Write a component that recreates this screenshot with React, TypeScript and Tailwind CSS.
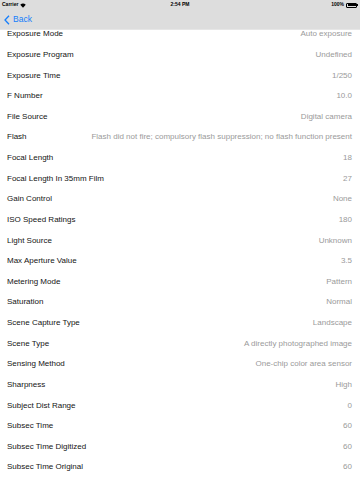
const rows: [string, string][] = [
  ["Exposure Mode", "Auto exposure"],
  ["Exposure Program", "Undefined"],
  ["Exposure Time", "1/250"],
  ["F Number", "10.0"],
  ["File Source", "Digital camera"],
  ["Flash", "Flash did not fire; compulsory flash suppression; no flash function present"],
  ["Focal Length", "18"],
  ["Focal Length In 35mm Film", "27"],
  ["Gain Control", "None"],
  ["ISO Speed Ratings", "180"],
  ["Light Source", "Unknown"],
  ["Max Aperture Value", "3.5"],
  ["Metering Mode", "Pattern"],
  ["Saturation", "Normal"],
  ["Scene Capture Type", "Landscape"],
  ["Scene Type", "A directly photographed image"],
  ["Sensing Method", "One-chip color area sensor"],
  ["Sharpness", "High"],
  ["Subject Dist Range", "0"],
  ["Subsec Time", "60"],
  ["Subsec Time Digitized", "60"],
  ["Subsec Time Original", "60"],
];

export default function App() {
  return (
    <div className="relative w-[360px] h-[480px] overflow-hidden bg-white font-['Liberation_Sans',Arial,sans-serif]">
      {/* list */}
      <div className="pt-[24px]">
        {rows.map(([label, value]) => (
          <div key={label} className="flex items-center justify-between h-[20.625px] pl-[7px] pr-[8px] text-[8px]">
            <span className="text-[#141414] whitespace-nowrap">{label}</span>
            <span className="text-[#9a9a9a] whitespace-nowrap">{value}</span>
          </div>
        ))}
      </div>

      {/* status + nav bar */}
      <div className="absolute top-0 left-0 right-0 h-[30px] bg-[#dddddd] border-b border-[#e6e6e6]">
        <div className="relative h-[10px] flex items-center justify-between px-[2px] text-[5px] font-bold text-black">
          <div className="flex items-center gap-[2px]">
            <span>Carrier</span>
            <svg width="6" height="5" viewBox="0 0 12 9">
              <path d="M6 9 L0.5 3 A8 8 0 0 1 11.5 3 Z" fill="#000" />
            </svg>
          </div>
          <span className="absolute left-1/2 -translate-x-1/2">2:54 PM</span>
          <div className="flex items-center gap-[2px]">
            <span>100%</span>
            <div className="flex items-center">
              <div className="w-[11px] h-[5px] border-[0.5px] border-black rounded-[1px] p-[0.5px]">
                <div className="w-full h-full bg-black" />
              </div>
              <div className="w-[1px] h-[2px] bg-black" />
            </div>
          </div>
        </div>
        <div className="h-[19px] flex items-center pl-[4px] text-[#157efb] text-[8.5px]">
          <svg width="6" height="10" viewBox="0 0 6 10" className="mr-[3px]">
            <path d="M5 0.8 L1 5 L5 9.2" fill="none" stroke="#157efb" strokeWidth="1.3" />
          </svg>
          <span>Back</span>
        </div>
      </div>
    </div>
  );
}
